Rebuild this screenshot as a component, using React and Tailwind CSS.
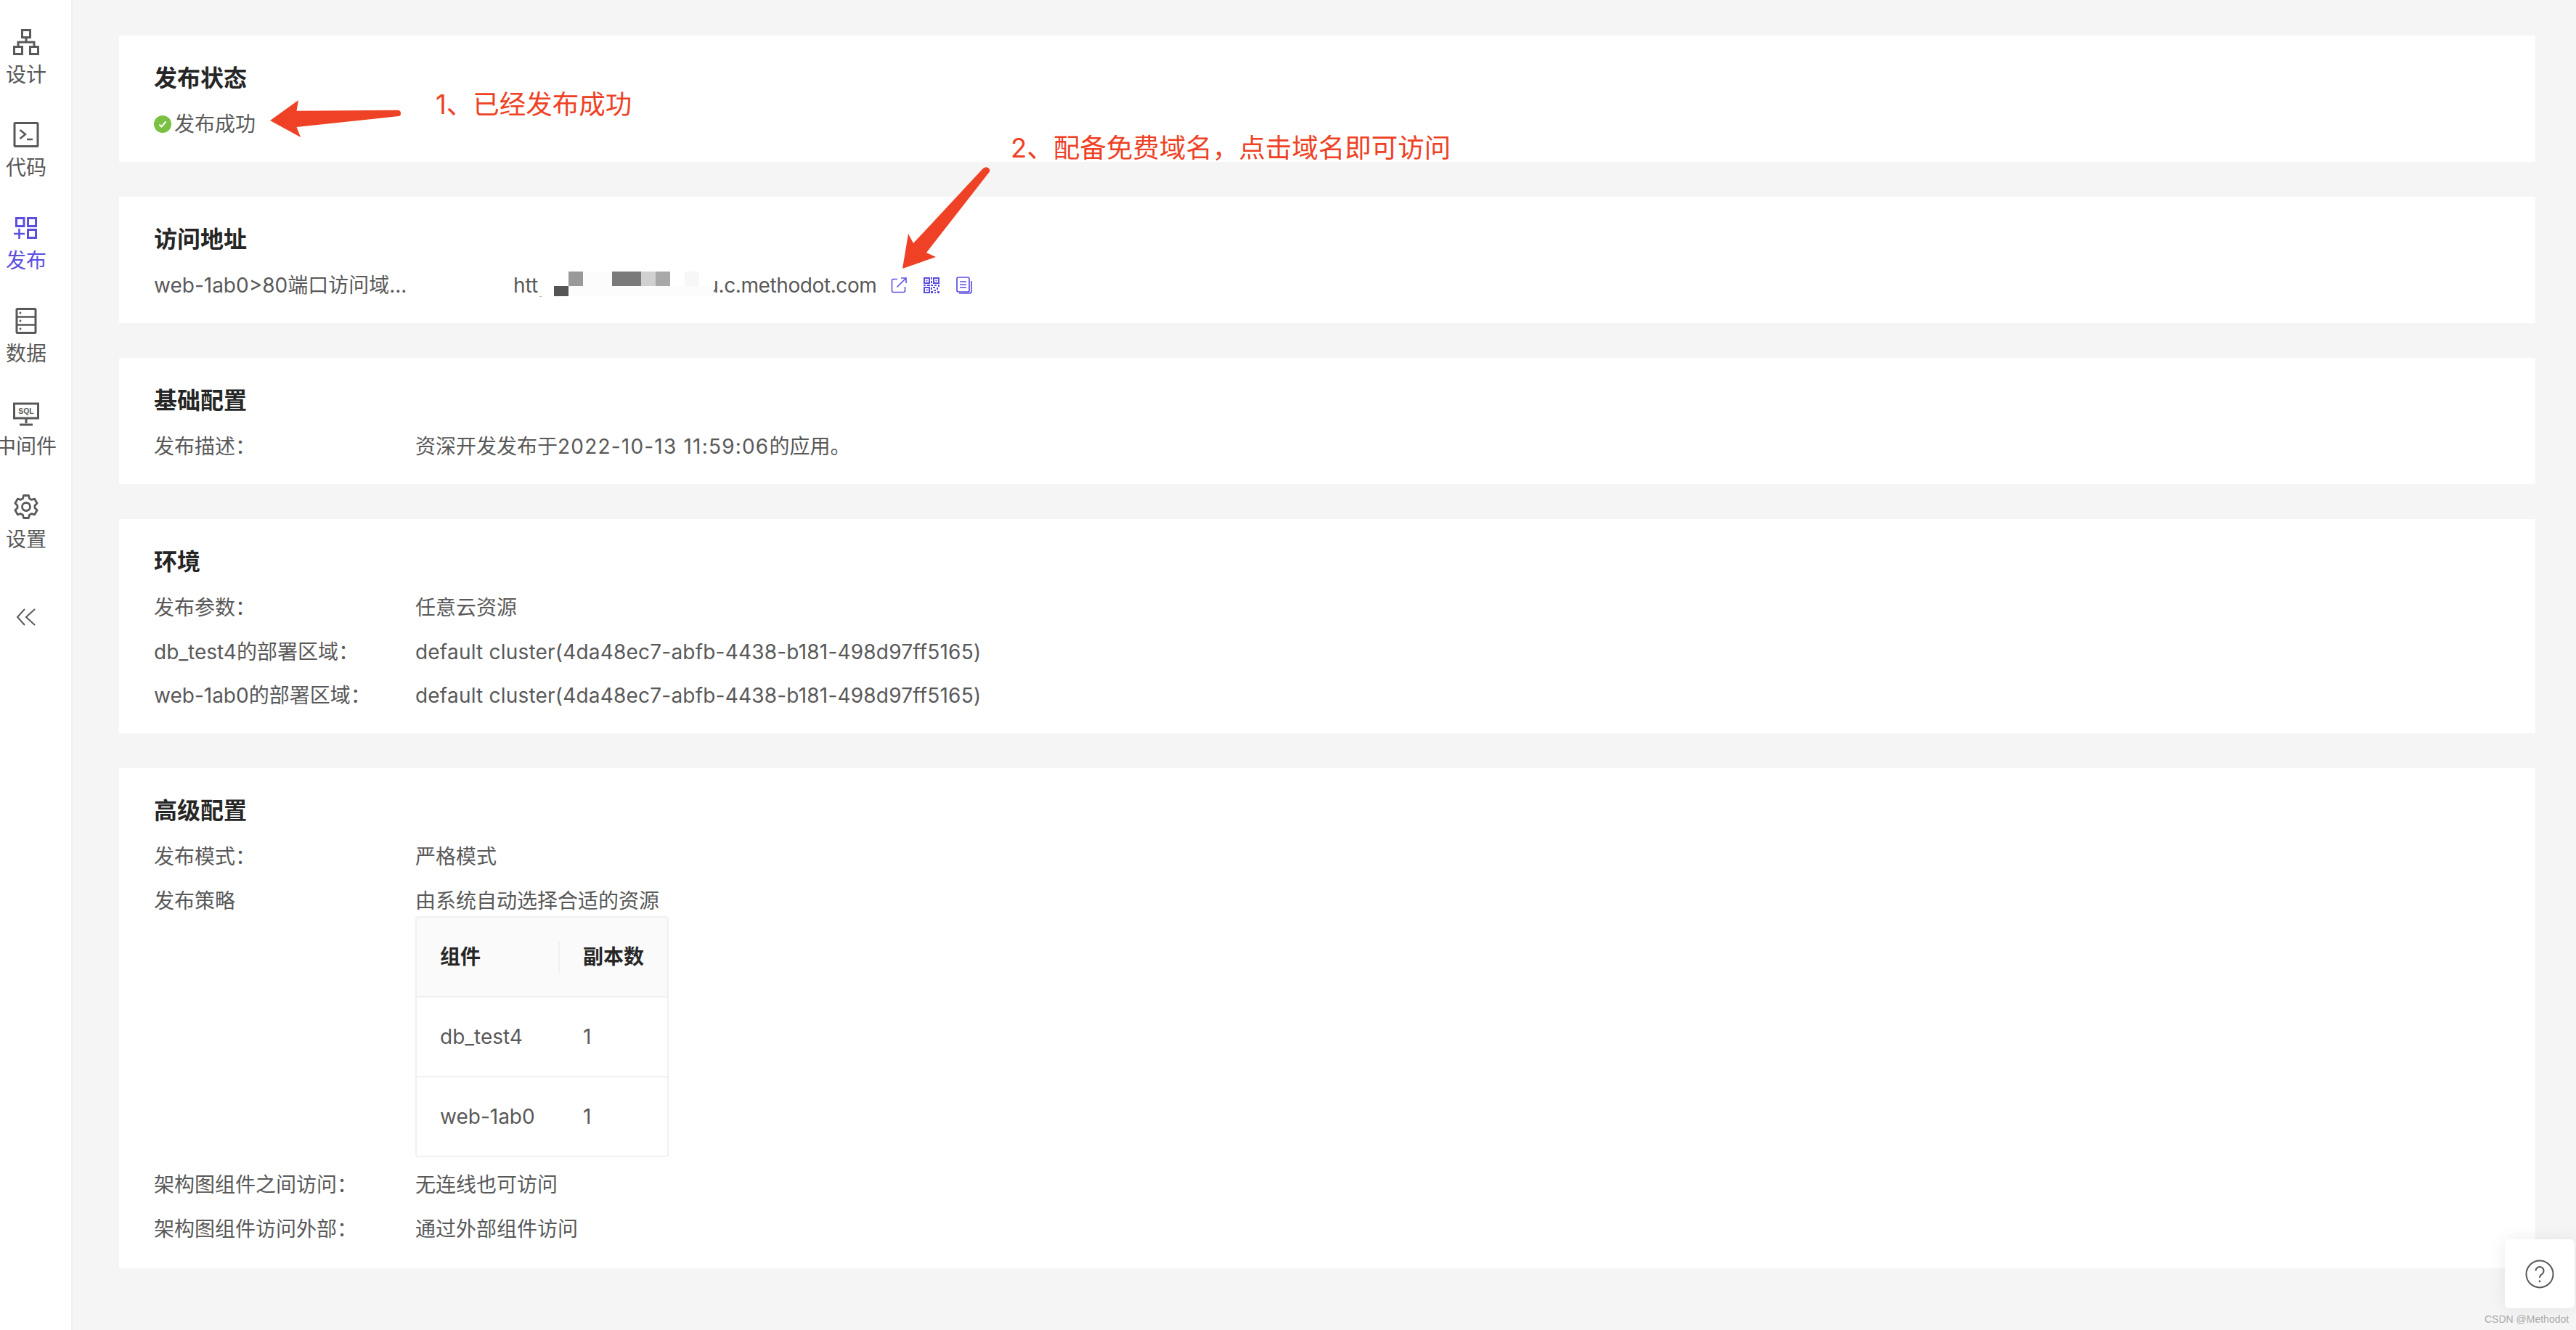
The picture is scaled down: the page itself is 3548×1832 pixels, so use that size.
import React from "react";

const purple = "#5b4fe0";

// sidebar icons
function DesignIcon() {
  return (
    <svg viewBox="0 0 36 36" className="w-[36px] h-[36px]" fill="none" stroke="#595959" strokeWidth="3">
      <rect x="12.5" y="1.5" width="11" height="10" />
      <rect x="1.5" y="24.5" width="11" height="10" />
      <rect x="23.5" y="24.5" width="11" height="10" />
      <path d="M18 11v7M7 24.5V18h22v6.5" />
    </svg>
  );
}

function CodeIcon() {
  return (
    <svg viewBox="0 0 36 36" className="w-[36px] h-[36px]" fill="none" stroke="#595959" strokeWidth="3">
      <rect x="2" y="1.5" width="32" height="32" rx="1" />
      <path d="M9.5 11l7.5 6-7.5 6" strokeWidth="2.5" />
      <path d="M19 24h8" strokeWidth="2.5" />
    </svg>
  );
}

function PublishIcon() {
  return (
    <svg viewBox="0 0 36 36" className="w-[36px] h-[36px]" fill="none" stroke={purple} strokeWidth="3">
      <rect x="4.5" y="4.5" width="10.5" height="11" />
      <rect x="20.5" y="4.5" width="11" height="11" />
      <rect x="20.5" y="20.5" width="11" height="11" />
      <path d="M8.5 19v14M1 26h15" strokeWidth="2.6" />
    </svg>
  );
}

function DataIcon() {
  return (
    <svg viewBox="0 0 36 36" className="w-[36px] h-[36px]" fill="none" stroke="#595959" strokeWidth="3">
      <rect x="5" y="1.5" width="26" height="33" rx="1" />
      <path d="M5 12.5h26M5 23.5h26" strokeWidth="2.5" />
      <circle cx="10" cy="7" r="1.4" fill="#595959" stroke="none" />
      <circle cx="10" cy="18" r="1.4" fill="#595959" stroke="none" />
      <circle cx="10" cy="29" r="1.4" fill="#595959" stroke="none" />
    </svg>
  );
}

function SqlIcon() {
  return (
    <svg viewBox="0 0 36 36" className="w-[36px] h-[36px]" fill="none" stroke="#595959" strokeWidth="3">
      <rect x="1.5" y="4" width="33" height="20" />
      <path d="M18 24v7M9 33h18" />
      <text x="18" y="18" textAnchor="middle" fontSize="10.5" fontWeight="700" fill="#595959" stroke="none" fontFamily="Liberation Sans, sans-serif">SQL</text>
    </svg>
  );
}

function GearIcon() {
  return (
    <svg viewBox="0 0 36 36" className="w-[36px] h-[36px]" fill="none" stroke="#595959" strokeWidth="2.8" strokeLinejoin="round">
      <path d="M14.5 2.5h7l1 4.2 3 1.7 4.2-1.2 3.4 6-3.1 3v3.6l3.1 3-3.4 6-4.2-1.2-3 1.7-1 4.2h-7l-1-4.2-3-1.7-4.2 1.2-3.4-6 3.1-3v-3.6l-3.1-3 3.4-6 4.2 1.2 3-1.7z" />
      <circle cx="18" cy="18" r="5.5" />
    </svg>
  );
}

function NavItem({ icon, label, active }) {
  return (
    <div className="h-[128px] flex flex-col items-center">
      {icon}
      <div className={"mt-[9px] text-[28px] leading-[36px] whitespace-nowrap " + (active ? "text-[#5b4fe0]" : "text-[#595959]")}>
        {label}
      </div>
    </div>
  );
}

function Sidebar() {
  return (
    <div className="w-[98px] shrink-0 bg-white border-r-2 border-[#f0f0f0] pt-10 overflow-hidden box-content">
      <div className="w-[72px] flex flex-col items-center">
        <NavItem icon={<DesignIcon />} label="设计" />
        <NavItem icon={<CodeIcon />} label="代码" />
        <NavItem icon={<PublishIcon />} label="发布" active />
        <NavItem icon={<DataIcon />} label="数据" />
        <NavItem icon={<SqlIcon />} label="中间件" />
        <NavItem icon={<GearIcon />} label="设置" />
        <svg viewBox="0 0 28 24" className="mt-[30px] w-[28px] h-[24px]" fill="none" stroke="#595959" strokeWidth="2">
          <path d="M12 1L2 12l10 11M26 1L14 12l12 11" />
        </svg>
      </div>
    </div>
  );
}

function Card({ title, children, last }) {
  return (
    <section className={"bg-white px-12 pt-[35px] " + (last ? "pb-[32px]" : "pb-[30px]")}>
      <h2 className="text-[32px] leading-[48px] font-semibold text-[#262626] mb-[17px]">{title}</h2>
      <div className="flex flex-col gap-[16.5px]">{children}</div>
    </section>
  );
}

function Row({ label, children }) {
  return (
    <div className="flex text-[28px] leading-[44px] text-[#595959]">
      <div className="w-[360px] shrink-0">{label}</div>
      <div>{children}</div>
    </div>
  );
}

// 打码区域
function Mosaic() {
  return (
    <span className="relative z-10 self-start mt-[3px] -ml-[15px] inline-grid grid-cols-[repeat(12,20px)] grid-rows-[20px_14px]">
      <i className="bg-white col-span-2" />
      <i className="bg-[#999999]" />
      <i className="bg-[#fcfcfc] col-span-2" />
      <i className="bg-[#7a7a7a] col-span-2" />
      <i className="bg-[#d0d0d0]" />
      <i className="bg-[#a8a8a8]" />
      <i className="bg-white" />
      <i className="bg-[#f7f7f7]" />
      <i className="bg-white" />
      <i className="bg-white" />
      <i className="bg-[#555555]" />
      <i className="bg-[#fcfcfc] col-span-10" />
    </span>
  );
}

function LinkIcons() {
  return (
    <div className="flex items-center gap-[22px] ml-[20px]">
      <svg viewBox="0 0 22 22" className="w-[22px] h-[22px]" fill="none" stroke={purple} strokeWidth="1.6">
        <path d="M9 2.5H3.5a2 2 0 0 0-2 2v14a2 2 0 0 0 2 2h14a2 2 0 0 0 2-2V13" />
        <path d="M8.5 13.5L20 2M14 1h7v7" />
      </svg>
      <svg viewBox="0 0 24 24" className="w-[24px] h-[24px]" fill={purple}>
        <path fillRule="evenodd" d="M1 1h9v9H1zM3 3v5h5V3zM14 1h9v9h-9zM16 3v5h5V3zM1 14h9v9H1zM3 16v5h5v-5z" />
        <path d="M4.5 4.5h2v2h-2zM17.5 4.5h2v2h-2zM4.5 17.5h2v2h-2zM11 1h2v3h-2zM11 6h2v3h-2zM1 11h3v2H1zM6 11h4v2H6zM11 11h3v2h-3zM16 11h3v2h-3zM21 11h2v3h-2zM14 14h3v2h-3zM19 15h2v3h-2zM11 15h2v3h-2zM15 18h3v2h-3zM11 20h3v3h-3zM20 20h3v3h-3zM16 21h2v2h-2z" />
      </svg>
      <svg viewBox="0 0 22 24" className="w-[22px] h-[24px]" fill="none" stroke={purple} strokeWidth="1.7">
        <rect x="1" y="1" width="17" height="20" rx="2" />
        <path d="M5 7h9M5 11h9M5 15h9M21 6v14a3 3 0 0 1-3 3H4" />
      </svg>
    </div>
  );
}

function ReplicaTable() {
  return (
    <div className="-mt-px w-[349px] border-2 border-[#f0f0f0] rounded-[4px]">
      <div className="flex h-[110px] items-center bg-[#fafafa] border-b-2 border-[#f0f0f0] font-semibold text-[#262626]">
        <div className="w-[197px] pl-8 h-[44px] leading-[44px] border-r-2 border-[#f0f0f0]">组件</div>
        <div className="pl-8">副本数</div>
      </div>
      <div className="flex h-[110px] items-center border-b-2 border-[#f0f0f0]">
        <div className="w-[197px] pl-8">db_test4</div>
        <div className="pl-8">1</div>
      </div>
      <div className="flex h-[108px] items-center">
        <div className="w-[197px] pl-8">web-1ab0</div>
        <div className="pl-8">1</div>
      </div>
    </div>
  );
}

function Arrows() {
  return (
    <svg className="absolute left-0 top-0 w-[3548px] h-[1832px] pointer-events-none" viewBox="0 0 3548 1832" fill="#ee4125">
      <path d="M372 166L411 138L408.5 152.7L548 151.7Q552 152 552 156Q552 160 549 160L408.5 175L414 189Z" />
      <path d="M1243 370L1251 322L1258 335L1354 232Q1359 228 1363 233Q1364 236 1361 239L1276 348L1289 354Z" />
    </svg>
  );
}

export default function App() {
  return (
    <div
      className="relative w-[3548px] h-[1832px] overflow-hidden flex bg-[#f5f5f5]"
      style={{ fontFamily: 'Inter, "Noto Sans CJK SC", sans-serif' }}
    >
      <Sidebar />

      <main className="flex-1 pl-[64px] pr-[56px] pt-[49px] flex flex-col gap-12">
        <Card title="发布状态">
          <div className="flex items-center text-[28px] leading-[44px] text-[#595959]">
            <svg viewBox="0 0 24 24" className="w-[24px] h-[24px] mr-1">
              <circle cx="12" cy="12" r="12" fill="#7ac143" />
              <path d="M7.5 12.5l3 3 6-7" fill="none" stroke="#fff" strokeWidth="2" />
            </svg>
            发布成功
          </div>
        </Card>

        <Card title="访问地址">
          <div className="flex items-center text-[28px] leading-[44px] text-[#595959]">
            <div className="w-[495px] shrink-0">web-1ab0&gt;80端口访问域...</div>
            <span>http</span>
            <Mosaic />
            <span className="-ml-[10px] tracking-[-0.4px]">u.c.methodot.com</span>
            <LinkIcons />
          </div>
        </Card>

        <Card title="基础配置">
          <Row label="发布描述：">
            资深开发发布于<span className="tracking-[1.2px]">2022-10-13 11:59:06</span>的应用。
          </Row>
        </Card>

        <Card title="环境">
          <Row label="发布参数：">任意云资源</Row>
          <Row label="db_test4的部署区域："><span className="tracking-[0.2px]">default cluster(4da48ec7-abfb-4438-b181-498d97ff5165)</span></Row>
          <Row label="web-1ab0的部署区域："><span className="tracking-[0.2px]">default cluster(4da48ec7-abfb-4438-b181-498d97ff5165)</span></Row>
        </Card>

        <Card title="高级配置" last>
          <Row label="发布模式：">严格模式</Row>
          <Row label="发布策略">
            由系统自动选择合适的资源
            <ReplicaTable />
          </Row>
          <Row label="架构图组件之间访问：">无连线也可访问</Row>
          <Row label="架构图组件访问外部：">通过外部组件访问</Row>
        </Card>
      </main>

      {/* 标注 */}
      <Arrows />
      <div className="absolute left-[600px] top-[120px] text-[36.5px] leading-[48px] text-[#ee4125] whitespace-nowrap">1、已经发布成功</div>
      <div className="absolute left-[1392px] top-[180px] text-[36.5px] leading-[48px] text-[#ee4125] whitespace-nowrap">2、配备免费域名，点击域名即可访问</div>

      {/* 帮助按钮 */}
      <div className="absolute left-[3450px] top-[1707px] w-[96px] h-[95px] bg-white rounded-[6px] shadow-[0_0_24px_rgba(0,0,0,0.08)] flex items-center justify-center">
        <svg viewBox="0 0 40 40" className="w-[40px] h-[40px]" fill="none" stroke="#595959" strokeWidth="2">
          <circle cx="20" cy="20" r="18.5" />
          <path d="M14.5 15.5a5.5 5.5 0 1 1 8.5 4.6c-2 1.3-3 2.4-3 4.9" />
          <circle cx="20" cy="30" r="1.4" fill="#595959" stroke="none" />
        </svg>
      </div>
      <div className="absolute left-[3422px] top-[1809px] text-[14px] leading-[16px] text-[#aaaaaa] whitespace-nowrap" style={{ fontFamily: '"Liberation Sans", sans-serif' }}>CSDN @Methodot</div>
    </div>
  );
}
